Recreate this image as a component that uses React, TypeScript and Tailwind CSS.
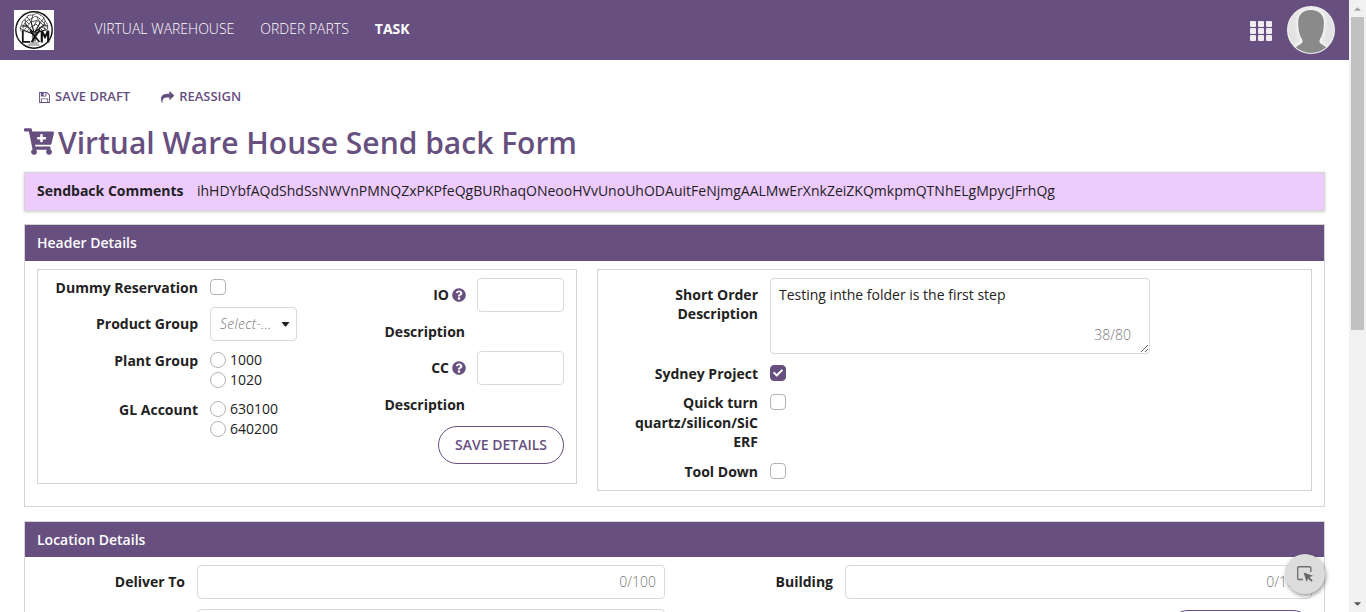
import type { ReactNode } from "react";
import { FaCartPlus, FaQuestionCircle, FaCheck } from "react-icons/fa";

function FloppyIcon() {
  return (
    <svg viewBox="128 128 1536 1536" className="size-[11px]" fill="currentColor">
      <path d="M512 1536h768v-384h-768v384zm896 0h128v-896q0-14-10-38.5t-20-34.5l-281-281q-10-10-34-20t-39-10v416q0 40-28 68t-68 28h-576q-40 0-68-28t-28-68v-416h-128v1280h128v-416q0-40 28-68t68-28h832q40 0 68 28t28 68v416zm-384-928v-320q0-13-9.5-22.5t-22.5-9.5h-192q-13 0-22.5 9.5t-9.5 22.5v320q0 13 9.5 22.5t22.5 9.5h192q13 0 22.5-9.5t9.5-22.5zm640 32v928q0 40-28 68t-68 28h-1344q-40 0-68-28t-28-68v-1344q0-40 28-68t68-28h928q40 0 88 20t76 48l280 280q28 28 48 76t20 88z" />
    </svg>
  );
}

function ShareIcon() {
  return (
    <svg viewBox="0 0 1792 1792" className="size-[13px]" fill="currentColor">
      <path d="M1792 640q0 26-19 45l-512 512q-19 19-45 19t-45-19-19-45v-256h-224q-98 0-175.5 6t-154 21.5-133 42.5-105.500 69.500-80 101-48.500 138.500-17.500 181q0 55 5 123 0 6 2.500 23.500t2.500 26.500q0 15-8.500 25t-23.500 10q-16 0-28-17-7-9-13-22t-13.500-30-10.500-24q-127-285-127-451 0-199 53-333 162-403 875-403h224v-256q0-26 19-45t45-19 45 19l512 512q19 19 19 45z" />
    </svg>
  );
}

function Logo() {
  return (
    <svg viewBox="0 0 40 40" className="size-10 bg-white" fill="none" stroke="#111" strokeLinecap="round">
      <circle cx="20" cy="20" r="18.2" strokeWidth="1.4" />
      <g strokeWidth="0.7">
        <path d="M19 32V22L12 15M20 22l-3-10M21 31V22l5-9M21 22l9-7M19 24l-10-4M22 23l9-3" strokeWidth="1.1" />
        <path d="M12 15l-4 1M12 15l-1-5M17 12l-4-5M17 12l2-7M26 13l-3-6M26 13l4-5M30 15l4 1M30 15l1-4M14 17l-6-1M28 17l5 3M9 20l-3-2M31 20l3 2M20 16l3-6M15 14l-4-4" />
      </g>
      <g stroke="#333" strokeWidth="1" strokeDasharray="1 1.2">
        <path d="M7 21c-2-4 1-5 1-8s4-3 5-6 6-1 8-3 5 1 7 2 2 4 4 6 1 5 2 8" />
        <path d="M9 18c0-3 2-5 4-7s5-2 7-4 5 1 7 3 4 3 5 7" />
        <path d="M10 21c1-3 3-4 5-7s5-3 8-3 6 3 8 8M12 22l5-5 5-3 6 6" />
      </g>
      <path d="M8.800 20.500v11.300h7.200M17.500 32l8.500-12.500M16 20.500l9.500 11.500" strokeWidth="1.800" strokeLinecap="butt" />
      <path d="M27.800 32.500V21l3.200 6 3.200-6v11.500" strokeWidth="2.200" strokeLinecap="butt" />
      <path d="M16 33h8M14 35h11" strokeWidth="0.600" />
    </svg>
  );
}

function AppsIcon() {
  return (
    <div className="grid grid-cols-3 gap-x-[2px] gap-y-[1px]">
      {[0, 1, 2, 3, 4, 5, 6, 7, 8].map((i) => (
        <span key={i} className="h-[6px] w-[6px] rounded-[1px] bg-[#efedf2]" />
      ))}
    </div>
  );
}

function Avatar() {
  return (
    <svg viewBox="0 0 48 48" className="size-12">
      <defs>
        <clipPath id="face">
          <circle cx="24" cy="24" r="23" />
        </clipPath>
        <filter id="glow" x="-30%" y="-30%" width="160%" height="160%">
          <feGaussianBlur stdDeviation="1.500" />
        </filter>
      </defs>
      <circle cx="24" cy="24" r="24" fill="#f1f1f1" />
      <g clipPath="url(#face)">
        <rect width="48" height="48" fill="#e3e3e3" />
        <path
          d="M24 4C15.500 4 11 9 11.200 17c.1 8 1.500 12.500 3.800 16 1.500 3 0 4.500-3 6L6 43v6h36v-6l-6-4c-3-1.500-4.500-3-3-6 2.300-3.500 3.800-8 3.900-16C37 9 32.500 4 24 4z"
          fill="#f6f6f6"
          stroke="#f6f6f6"
          strokeWidth="4"
          filter="url(#glow)"
        />
        <path
          d="M24 4C15.500 4 11 9 11.200 17c.1 8 1.500 12.500 3.800 16 1.500 3 0 4.500-3 6L6 43v6h36v-6l-6-4c-3-1.500-4.500-3-3-6 2.300-3.500 3.800-8 3.900-16C37 9 32.500 4 24 4z"
          fill="#8a8a8a"
        />
      </g>
    </svg>
  );
}

function Label({ children, className = "" }: { children: ReactNode; className?: string }) {
  return <div className={`shrink-0 text-right font-bold text-[#222] ${className}`}>{children}</div>;
}

function Checkbox({ checked = false }: { checked?: boolean }) {
  return (
    <span
      className={`flex size-4 shrink-0 items-center justify-center rounded-[4px] border ${
        checked ? "border-[#674f7f] bg-[#674f7f] text-white" : "border-[#b3b3b3] bg-white"
      }`}
    >
      {checked && <FaCheck className="size-[10px]" />}
    </span>
  );
}

function Radio({ label }: { label: string }) {
  return (
    <div className="flex h-5 items-center gap-1">
      <span className="size-4 rounded-full border border-[#b3b3b3] bg-white" />
      <span>{label}</span>
    </div>
  );
}

function Panel({
  title,
  className = "",
  barClass = "h-9",
  children,
}: {
  title: string;
  className?: string;
  barClass?: string;
  children: ReactNode;
}) {
  return (
    <section className={`border border-[#d4d4d4] bg-white ${className}`}>
      <h2 className={`flex items-center bg-[#674f7f] px-3 font-semibold text-white ${barClass}`}>{title}</h2>
      {children}
    </section>
  );
}

const inputBox = "rounded-[4px] border border-[#d9d9d9] bg-white";

export default function App() {
  return (
    <div className="flex h-[612px] w-[1366px] overflow-hidden bg-white font-['Open_Sans',sans-serif] text-[14px] leading-[19.5px] text-[#222]">
      <div className="relative h-full w-[1349px] overflow-hidden">
        <header className="flex h-[60px] items-center bg-[#674f7f] pr-[14px] pl-[14px] text-white">
          <Logo />
          <nav className="ml-[40.6px] flex flex-1 gap-[26px] pb-[2px] font-light">
            <span>VIRTUAL WAREHOUSE</span>
            <span>ORDER PARTS</span>
            <span className="font-bold">TASK</span>
          </nav>
          <div className="mr-[15px] pt-[2px]">
            <AppsIcon />
          </div>
          <Avatar />
        </header>

        <main className="px-6">
          <div className="flex h-[67px] items-end gap-[31px] pl-[15px] text-[13px] font-semibold text-[#674f7f]">
            <div className="mb-5 flex h-5 items-center gap-[5px]">
              <FloppyIcon />
              <span>SAVE DRAFT</span>
            </div>
            <div className="mb-5 flex h-5 items-center gap-[5px]">
              <ShareIcon />
              <span>REASSIGN</span>
            </div>
          </div>

          <h1 className="flex h-[45px] items-center gap-[4px] pb-[13px] text-[30px] leading-8 font-semibold text-[#674f7f]">
            <FaCartPlus className="mb-[3px] h-[27px] w-[30px]" />
            <span>Virtual Ware House Send back Form</span>
          </h1>

          <div className="flex h-[39px] items-center gap-[13.5px] border border-[#d4d4d4] bg-[#eecbff] pb-[2px] pl-3 shadow-[0_1px_3px_rgba(0,0,0,0.2)]">
            <span className="font-bold">Sendback Comments</span>
            <span className="tracking-[0.01px]">
              ihHDYbfAQdShdSsNWVnPMNQZxPKPfeQgBURhaqONeooHVvUnoUhODAuitFeNjmgAALMwErXnkZeiZKQmkpmQTNhELgMpycJFrhQg
            </span>
          </div>

          <Panel title="Header Details" className="mt-[13px] h-[283px]">
            <div className="flex items-start gap-5 px-3 pt-2">
              <div className="flex h-[215px] w-[540px] justify-between border border-[#d4d4d4] pt-2 pr-3">
                <div className="flex flex-col">
                  <div className="flex h-[29px] gap-3">
                    <Label className="w-[160px]">Dummy Reservation</Label>
                    <div className="pt-[1px]">
                      <Checkbox />
                    </div>
                  </div>
                  <div className="flex h-[44px] gap-3">
                    <Label className="w-[160px] pt-[7px]">Product Group</Label>
                    <div className={`flex h-[34px] w-[87px] items-center justify-between pr-[6px] pl-[9px] ${inputBox}`}>
                      <span className="font-light text-[#777] italic tracking-[0.3px]">Select-...</span>
                      <svg viewBox="0 0 8 5" className="h-[5px] w-[9px] shrink-0" fill="#222">
                        <path d="M0 0h8L4.500 4.600h-1z" />
                      </svg>
                    </div>
                  </div>
                  <div className="flex h-[49px] gap-3">
                    <Label className="w-[160px]">Plant Group</Label>
                    <div className="-mt-[1px]">
                      <Radio label="1000" />
                      <Radio label="1020" />
                    </div>
                  </div>
                  <div className="flex gap-3">
                    <Label className="w-[160px]">GL Account</Label>
                    <div className="-mt-[1px]">
                      <Radio label="630100" />
                      <Radio label="640200" />
                    </div>
                  </div>
                </div>

                <div className="flex w-[190px] flex-col">
                  {["IO", "CC"].map((name) => (
                    <div key={name} className="h-[73px]">
                      <div className="flex h-[34px] items-center justify-between">
                        <Label className="flex w-[92px] items-center justify-end gap-[3px]">
                          {name}
                          <FaQuestionCircle className="size-[14px] text-[#674f7f]" />
                        </Label>
                        <div className={`h-[34px] w-[87px] ${inputBox}`} />
                      </div>
                      <Label className="w-[91px] pt-[10px]">Description</Label>
                    </div>
                  ))}
                  <div className="mt-[2px] flex h-[38px] w-[126px] items-center justify-center self-end rounded-full border border-[#674f7f] font-semibold text-[#674f7f]">
                    SAVE DETAILS
                  </div>
                </div>
              </div>

              <div className="h-[222px] flex-1 border border-[#d4d4d4] pt-2">
                <div className="flex h-[86px] gap-3">
                  <Label className="w-[160px] pt-[7px] leading-[19px]">
                    Short Order
                    <br />
                    Description
                  </Label>
                  <div className="relative h-[76px] w-[380px]">
                    <textarea
                      className={`block h-full w-full resize px-2 py-[6px] outline-none ${inputBox}`}
                      defaultValue="Testing inthe folder is the first step"
                    />
                    <span className="absolute right-[19px] bottom-[10px] font-light text-[#777]">38/80</span>
                  </div>
                </div>
                <div className="flex h-[29px] gap-3">
                  <Label className="w-[160px]">Sydney Project</Label>
                  <div className="pt-[1px]">
                    <Checkbox checked />
                  </div>
                </div>
                <div className="flex h-[69px] gap-3">
                  <Label className="w-[160px]">
                    Quick turn
                    <br />
                    quartz/silicon/SiC
                    <br />
                    ERF
                  </Label>
                  <div className="pt-[1px]">
                    <Checkbox />
                  </div>
                </div>
                <div className="flex gap-3">
                  <Label className="w-[160px]">Tool Down</Label>
                  <div className="pt-[1px]">
                    <Checkbox />
                  </div>
                </div>
              </div>
            </div>
          </Panel>

          <Panel title="Location Details" className="mt-[14px] h-[200px]" barClass="h-[35px]">
            <div className="flex justify-between px-3 pt-2">
              <div className="flex gap-3">
                <Label className="w-[148px] pt-[7px]">Deliver To</Label>
                <div className="flex flex-col gap-[10px]">
                  <div className={`flex h-[34px] w-[468px] items-center justify-end px-2 font-light text-[#777] ${inputBox}`}>
                    0/100
                  </div>
                  <div className={`h-[34px] w-[468px] ${inputBox}`} />
                </div>
              </div>
              <div className="flex flex-col items-end gap-[11px]">
                <div className="flex gap-3">
                  <Label className="pt-[7px]">Building</Label>
                  <div className={`flex h-[34px] w-[467px] items-center justify-end px-2 font-light text-[#777] ${inputBox}`}>
                    0/100
                  </div>
                </div>
                <div className="h-[38px] w-[143px] rounded-full border border-[#674f7f]" />
              </div>
            </div>
          </Panel>
        </main>

        <div className="absolute top-[554px] left-[1285px] flex size-10 items-center justify-center rounded-full bg-[#dcdcdc] shadow-[1px_2px_4px_rgba(0,0,0,0.4)]">
          <svg viewBox="0 0 16 16" className="size-4" fill="none">
            <path d="M6 13.500H2Q.7 13.500.7 12.200V2Q.7.700 2 .700h10.500q1.300 0 1.300 1.300V6" stroke="#707070" strokeWidth="1.400" />
            <path d="M6.500 6.500l9.500 3.200-3.600 1.500 3.300 3.300-1.300 1.300-3.300-3.300L9.700 16z" fill="#666" />
          </svg>
        </div>
      </div>

      <div className="flex w-[17px] flex-col items-center justify-between bg-[#f1f1f1]">
        <div className="flex w-full flex-col items-center">
          <div className="flex h-[17px] items-center">
            <svg viewBox="0 0 8 4" className="h-1 w-[7px]" fill="#a3a3a3">
              <path d="M0 4l4-4 4 4z" />
            </svg>
          </div>
          <div className="h-[313px] w-[13px] bg-[#c1c1c1]" />
        </div>
        <div className="flex h-[17px] items-center">
          <svg viewBox="0 0 8 4" className="h-1 w-[7px]" fill="#505050">
            <path d="M0 0h8L4 4z" />
          </svg>
        </div>
      </div>
    </div>
  );
}
